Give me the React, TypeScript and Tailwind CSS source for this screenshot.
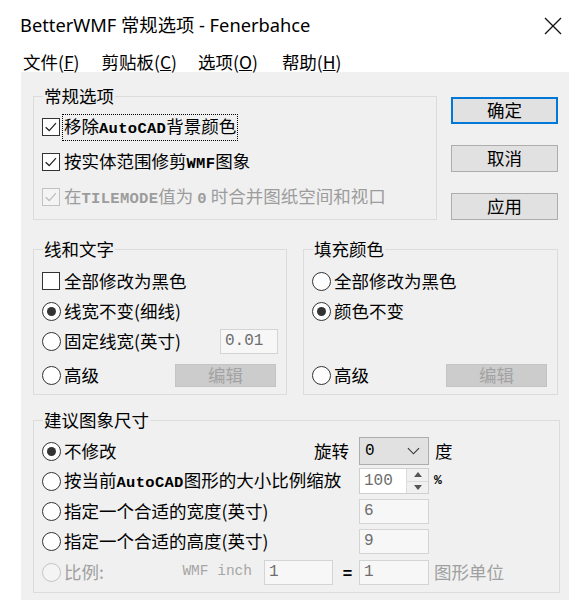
import React from 'react';

const Check: React.FC<{ checked?: boolean; disabled?: boolean }> = ({ checked, disabled }) => (
  <span
    className={`w-[18px] h-[18px] shrink-0 border flex items-center justify-center ${
      disabled ? 'border-[#c2c2c2] bg-[#f4f4f4]' : 'border-[#333333] bg-white'
    }`}
  >
    {checked && (
      <svg viewBox="0 0 18 18" className="w-[16px] h-[16px]">
        <path d="M3 9.2 L7 13 L14.6 4.6" fill="none" stroke={disabled ? '#bcbcbc' : '#222'} strokeWidth="1.4" />
      </svg>
    )}
  </span>
);

const Radio: React.FC<{ checked?: boolean; disabled?: boolean }> = ({ checked, disabled }) => (
  <span
    className={`w-[19px] h-[19px] shrink-0 rounded-full border-[1.5px] flex items-center justify-center ${
      disabled ? 'border-[#c4c4c4] bg-[#f4f4f4]' : 'border-[#333333] bg-white'
    }`}
  >
    {checked && <span className="w-[9px] h-[9px] rounded-full bg-[#333333]" />}
  </span>
);

const Mono: React.FC<{ children: React.ReactNode }> = ({ children }) => (
  <span className="font-['Liberation_Mono',monospace] text-[15.5px] font-bold tracking-[0.3px]">{children}</span>
);

const Field: React.FC<{ value: string; w?: string }> = ({ value, w = 'w-[70px]' }) => (
  <div className={`${w} h-[25px] shrink-0 border border-[#d4d4d4] bg-[#f7f7f7] flex items-center pl-[4px] text-[16px] text-[#6d6d6d] font-['Liberation_Mono',monospace]`}>
    {value}
  </div>
);

const EditBtn: React.FC = () => (
  <div className="w-[101px] h-[23px] bg-[#cccccc] border border-[#c4c4c4] flex items-center justify-center text-[#a3a3a3]">
    编辑
  </div>
);

const Group: React.FC<{ title: string; className?: string; children: React.ReactNode }> = ({ title, className, children }) => (
  <fieldset className={`border border-[#dcdcdc] shrink-0 ${className ?? ''}`}>
    <legend className="ml-[9px] px-[1px] leading-[22px]">{title}</legend>
    {children}
  </fieldset>
);

const Button: React.FC<{ label: string; primary?: boolean }> = ({ label, primary }) => (
  <div
    className={`w-[107px] h-[27px] bg-[#e1e1e1] flex items-center justify-center ${
      primary ? 'border-2 border-[#0078d7]' : 'border border-[#adadad]'
    }`}
  >
    {label}
  </div>
);

export default function App() {
  return (
    <div className="w-[577px] h-[600px] bg-white overflow-hidden text-black font-['Noto_Sans_CJK_SC','Noto_Sans',sans-serif]">
      {/* title bar */}
      <div className="h-[51px] flex items-center pl-[20px] pr-[15px]">
        <span className="text-[18.3px] font-['Noto_Sans','Noto_Sans_CJK_SC',sans-serif] leading-none">
          BetterWMF 常规选项 - Fenerbahce
        </span>
        <svg viewBox="0 0 18 18" className="w-[18px] h-[18px] ml-auto">
          <path d="M1 1 L17 17 M17 1 L1 17" stroke="#111" strokeWidth="1.3" />
        </svg>
      </div>

      {/* menu */}
      <div className="h-[21px] flex items-center text-[17.5px] leading-none">
        <span className="ml-[23px]">文件(<span className="underline">F</span>)</span>
        <span className="ml-[22px]">剪贴板(<span className="underline">C</span>)</span>
        <span className="ml-[21px]">选项(<span className="underline">O</span>)</span>
        <span className="ml-[24px]">帮助(<span className="underline">H</span>)</span>
      </div>

      {/* dialog body */}
      <div className="ml-[21px] w-[548px] h-[528px] bg-[#f0f0f0] pt-[13px] pl-[12px] text-[17.5px]">
        <div className="flex">
          <Group title="常规选项" className="w-[404px] pb-[3px]">
            <div className="flex flex-col gap-[1px] mt-[3px] pl-[8px]">
              <div className="h-[34px] flex items-center gap-[3px]">
                <Check checked />
                <span className="outline outline-1 outline-dotted outline-black px-[1px] leading-[22px]">
                  移除<Mono>AutoCAD</Mono>背景颜色
                </span>
              </div>
              <div className="h-[34px] flex items-center gap-[4px]">
                <Check checked />
                <span>
                  按实体范围修剪<Mono>WMF</Mono>图象
                </span>
              </div>
              <div className="h-[34px] flex items-center gap-[4px] text-[#9c9c9c]">
                <Check checked disabled />
                <span>
                  在<Mono>TILEMODE</Mono>值为 <Mono>0</Mono> 时合并图纸空间和视口
                </span>
              </div>
            </div>
          </Group>

          <div className="ml-[14px] mt-[12px] flex flex-col gap-[21px]">
            <Button label="确定" primary />
            <Button label="取消" />
            <Button label="应用" />
          </div>
        </div>

        <div className="flex gap-[16px] mt-[18px]">
          <Group title="线和文字" className="w-[254px] pb-[4px]">
            <div className="mt-[6px] pl-[8px] pr-[8px]">
              <div className="h-[30px] flex items-center gap-[4px]">
                <Check />
                <span>全部修改为黑色</span>
              </div>
              <div className="h-[30px] flex items-center gap-[3px]">
                <Radio checked />
                <span>线宽不变(细线)</span>
              </div>
              <div className="h-[30px] flex items-center gap-[3px]">
                <Radio />
                <span>固定线宽(英寸)</span>
                <div className="ml-auto">
                  <Field value="0.01" w="w-[58px]" />
                </div>
              </div>
              <div className="h-[30px] mt-[4px] flex items-center gap-[3px]">
                <Radio />
                <span>高级</span>
                <div className="ml-auto mr-[2px]">
                  <EditBtn />
                </div>
              </div>
            </div>
          </Group>

          <Group title="填充颜色" className="w-[255px] pb-[4px]">
            <div className="mt-[6px] pl-[8px] pr-[10px]">
              <div className="h-[30px] flex items-center gap-[3px]">
                <Radio />
                <span>全部修改为黑色</span>
              </div>
              <div className="h-[30px] flex items-center gap-[3px]">
                <Radio checked />
                <span>颜色不变</span>
              </div>
              <div className="h-[30px]" />
              <div className="h-[30px] mt-[4px] flex items-center gap-[3px]">
                <Radio />
                <span>高级</span>
                <div className="ml-auto">
                  <EditBtn />
                </div>
              </div>
            </div>
          </Group>
        </div>

        <Group title="建议图象尺寸" className="w-[527px] mt-[14px] pb-[5px]">
          <div className="mt-[5px] pl-[8px]">
            <div className="h-[30px] flex items-center">
              <div className="w-[317px] flex items-center gap-[3px]">
                <Radio checked />
                <span>不修改</span>
                <span className="ml-auto mr-[10px]">旋转</span>
              </div>
              <div className="w-[70px] h-[28px] bg-[#e1e1e1] border border-[#adadad] flex items-center pl-[5px] pr-[8px]">
                <span className="font-['Liberation_Mono',monospace] text-[16px]">0</span>
                <svg viewBox="0 0 14 8" className="w-[13px] h-[8px] ml-auto">
                  <path d="M1 1 L7 7 L13 1" fill="none" stroke="#333" strokeWidth="1.2" />
                </svg>
              </div>
              <span className="ml-[6px]">度</span>
            </div>

            <div className="h-[30px] flex items-center">
              <div className="w-[317px] flex items-center gap-[3px]">
                <Radio />
                <span>
                  按当前<Mono>AutoCAD</Mono>图形的大小比例缩放
                </span>
              </div>
              <div className="w-[70px] h-[26px] bg-white border border-[#cfcfcf] flex items-center">
                <span className="pl-[4px] text-[16px] text-[#6d6d6d] font-['Liberation_Mono',monospace]">100</span>
                <div className="ml-auto w-[22px] h-full flex flex-col border-l border-[#dcdcdc] bg-[#f0f0f0]">
                  <div className="flex-1 flex items-center justify-center border-b border-[#dcdcdc]">
                    <svg viewBox="0 0 8 5" className="w-[8px] h-[5px]"><path d="M0 5 L4 0 L8 5 Z" fill="#555" /></svg>
                  </div>
                  <div className="flex-1 flex items-center justify-center">
                    <svg viewBox="0 0 8 5" className="w-[8px] h-[5px]"><path d="M0 0 L4 5 L8 0 Z" fill="#555" /></svg>
                  </div>
                </div>
              </div>
              <span className="ml-[5px] text-[13px] font-bold font-['Liberation_Mono',monospace]">%</span>
            </div>

            <div className="h-[30px] flex items-center">
              <div className="w-[317px] flex items-center gap-[3px]">
                <Radio />
                <span>指定一个合适的宽度(英寸)</span>
              </div>
              <Field value="6" />
            </div>

            <div className="h-[30px] flex items-center">
              <div className="w-[317px] flex items-center gap-[3px]">
                <Radio />
                <span>指定一个合适的高度(英寸)</span>
              </div>
              <Field value="9" />
            </div>

            <div className="h-[30px] mt-[1px] flex items-center">
              <div className="w-[317px] flex items-center gap-[3px] text-[#a0a0a0]">
                <Radio disabled />
                <span>比例:</span>
                <span className="ml-auto mr-[9px] font-['Liberation_Mono',monospace] text-[14.5px] text-[#a6a6a6]">
                  WMF inch
                </span>
                <Field value="1" w="w-[69px]" />
                <span className="w-[23px] text-center text-black font-bold text-[16px]">=</span>
              </div>
              <Field value="1" />
              <span className="ml-[5px] text-[#a0a0a0]">图形单位</span>
            </div>
          </div>
        </Group>
      </div>
    </div>
  );
}
